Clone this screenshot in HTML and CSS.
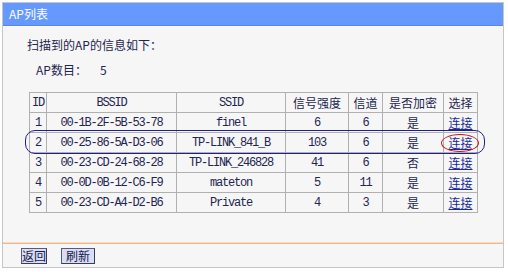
FILE: index.html
```html
<!DOCTYPE html>
<html lang="zh-CN">
<head>
  <meta charset="UTF-8">
  <title>AP列表</title>
  <link rel="stylesheet" href="styles.css">
</head>
<body>
  <div class="panel">
    <div class="panel-title">AP列表</div>

    <div class="content">
      <p class="intro">扫描到的AP的信息如下：</p>
      <p class="count">AP数目：<span class="num">5</span></p>

      <table class="ap-table">
        <colgroup>
          <col style="width: 17px">
          <col style="width: 130px">
          <col style="width: 109px">
          <col style="width: 63px">
          <col style="width: 34px">
          <col style="width: 61px">
          <col style="width: 34px">
        </colgroup>
        <tr>
          <th class="en">ID</th>
          <th class="en">BSSID</th>
          <th class="en">SSID</th>
          <th>信号强度</th>
          <th>信道</th>
          <th>是否加密</th>
          <th>选择</th>
        </tr>
        <tr>
          <td class="en">1</td>
          <td class="en">00-1B-2F-5B-53-78</td>
          <td class="en">finel</td>
          <td class="en">6</td>
          <td class="en">6</td>
          <td>是</td>
          <td><a href="#">连接</a></td>
        </tr>
        <tr>
          <td class="en">2</td>
          <td class="en">00-25-86-5A-D3-06</td>
          <td class="en">TP-LINK_841_B</td>
          <td class="en">103</td>
          <td class="en">6</td>
          <td>是</td>
          <td><a href="#">连接</a></td>
        </tr>
        <tr>
          <td class="en">3</td>
          <td class="en">00-23-CD-24-68-28</td>
          <td class="en">TP-LINK_246828</td>
          <td class="en">41</td>
          <td class="en">6</td>
          <td>否</td>
          <td><a href="#">连接</a></td>
        </tr>
        <tr>
          <td class="en">4</td>
          <td class="en">00-0D-0B-12-C6-F9</td>
          <td class="en">mateton</td>
          <td class="en">5</td>
          <td class="en">11</td>
          <td>是</td>
          <td><a href="#">连接</a></td>
        </tr>
        <tr>
          <td class="en">5</td>
          <td class="en">00-23-CD-A4-D2-B6</td>
          <td class="en">Private</td>
          <td class="en">4</td>
          <td class="en">3</td>
          <td>是</td>
          <td><a href="#">连接</a></td>
        </tr>
      </table>
    </div>

    <div class="divider"></div>

    <div class="actions">
      <button class="btn btn-back">返回</button>
      <button class="btn btn-refresh">刷新</button>
    </div>

    <!-- hand-drawn marks over the screenshot -->
    <div class="mark-row"></div>
    <div class="mark-link"></div>
  </div>
</body>
</html>
```

FILE: styles.css
```css
* {
  box-sizing: border-box;
  margin: 0;
  padding: 0;
}

body {
  font-family: "Noto Sans CJK SC", "Liberation Sans", sans-serif;
  font-size: 12px;
  background: #ffffff;
  color: #1e2550;
}

.en {
  font-family: "Liberation Mono", "Noto Sans CJK SC", monospace;
  letter-spacing: -1.2px;
}

.panel {
  position: relative;
  margin: 2px 0 0 2px;
  width: 502px;
  height: 266px;
  border: 1px solid #c6c6c6;
  background: #f6f6f6;
  overflow: hidden;
}

.panel-title {
  height: 23px;
  line-height: 22px;
  padding-left: 6px;
  background: #6699ff;
  border-bottom: 1px solid #5a86e6;
  color: #ffffff;
  font-size: 12px;
}

.content {
  padding-left: 24px;
}

.intro {
  margin-top: 9px;
  height: 20px;
  line-height: 20px;
}

.count {
  margin-top: 5px;
  height: 20px;
  padding-left: 9px;
  line-height: 20px;
}

.count .num {
  margin-left: 13px;
}

.ap-table {
  margin-top: 12px;
  margin-left: 2px;
  width: 448px;
  table-layout: fixed;
  border-collapse: collapse;
  border: 1px solid #a6a6a6;
}

.ap-table th,
.ap-table td {
  height: 20px;
  padding: 0;
  border: 1px solid #b0b0b0;
  text-align: center;
  font-weight: normal;
  line-height: 18px;
  white-space: nowrap;
  overflow: hidden;
}

.ap-table a {
  color: #1a2a9a;
  text-decoration: underline;
}

.divider {
  margin-top: 29px;
  height: 2px;
  border-top: 1px solid #f7dcc2;
  border-bottom: 1px solid #eeb888;
}

.actions {
  display: flex;
  gap: 14px;
  padding: 4px 0 0 18px;
}

.btn {
  height: 16px;
  font-family: "Noto Sans CJK SC", sans-serif;
  font-size: 12px;
  line-height: 14px;
  color: #1a1a40;
  background: #d8ddf8;
  border: 1px solid #3a3a5a;
  border-top-color: #5a5a7a;
  border-left-color: #5a5a7a;
}

.btn-back {
  width: 26px;
}

.btn-refresh {
  width: 34px;
}

.mark-row {
  position: absolute;
  left: 22px;
  top: 127px;
  width: 460px;
  height: 24px;
  border: 1px solid #20208a;
  border-radius: 10px;
}

.mark-link {
  position: absolute;
  left: 438px;
  top: 131px;
  width: 38px;
  height: 18px;
  border: 1px solid #cc1111;
  border-radius: 50%;
}
```
